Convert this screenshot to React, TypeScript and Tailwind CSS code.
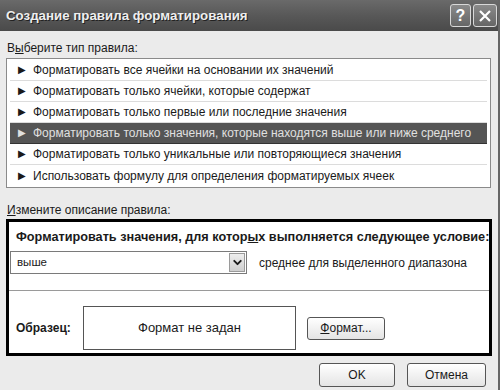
import { ChevronDown } from "lucide-react";

const rules = [
  "Форматировать все ячейки на основании их значений",
  "Форматировать только ячейки, которые содержат",
  "Форматировать только первые или последние значения",
  "Форматировать только значения, которые находятся выше или ниже среднего",
  "Форматировать только уникальные или повторяющиеся значения",
  "Использовать формулу для определения форматируемых ячеек",
];

const selected = 3;

const App = () => {
  return (
    <div className="w-[500px] h-[390px] bg-[#ebebeb] flex flex-col overflow-hidden border-r-2 border-[#666] font-['Liberation_Sans',sans-serif] text-[12px] text-[#1a1a1a]">
      {/* Title bar */}
      <div className="h-[31px] flex items-center justify-between pl-[6px] pr-[1px] bg-gradient-to-b from-[#6a6a6a] via-[#585858] to-[#4a4a4a]">
        <span className="text-[13.3px] font-bold text-[#eeeeee] [text-shadow:1px_1px_0_#222]">
          Создание правила форматирования
        </span>
        <div className="flex gap-[2px]">
          <div className="w-[21px] h-[23px] rounded-[3px] border border-[#d8d8d8] bg-gradient-to-b from-[#8a8a8a] to-[#666] flex items-center justify-center text-[16px] font-bold text-white">
            ?
          </div>
          <div className="w-[24px] h-[23px] rounded-[3px] border border-[#d8d8d8] bg-gradient-to-b from-[#8a8a8a] to-[#666] flex items-center justify-center">
            <svg width="14" height="14" viewBox="0 0 14 14">
              <path d="M2 2 L12 12 M12 2 L2 12" stroke="#fff" strokeWidth="2.2" />
            </svg>
          </div>
        </div>
      </div>

      <div className="flex flex-col px-[6px]">
        <div className="mt-[9px] h-[16px] leading-[16px] pl-[1px]">
          В<span className="underline">ы</span>берите тип правила:
        </div>
        <div className="mt-[2px] mr-[1px] border border-[#8a8a8a] bg-white px-[3px] py-[1px] flex flex-col">
          {rules.map((r, i) => (
            <div
              key={r}
              className={
                "h-[21px] flex items-center gap-[7px] pl-[8px] border-b " +
                (i === selected
                  ? "bg-[#555] text-[#e0e0e0] border-[#333]"
                  : "border-[#dcdcdc]") +
                (i === rules.length - 1 ? " border-b-0" : "")
              }
            >
              <span className="text-[10px] leading-none">▶</span>
              <span>{r}</span>
            </div>
          ))}
        </div>

        <div className="mt-[14px] h-[16px] leading-[16px] pl-[1px]">
          <span className="underline">И</span>змените описание правила:
        </div>
        <div className="mt-[1px] border-[3px] border-black bg-white flex flex-col h-[137px]">
          <div className="px-[7px] pt-[6px] font-bold text-[12.7px] whitespace-nowrap">
            Форматировать значения, для котор<span className="underline">ы</span>х выполняется следующее условие:
          </div>
          <div className="flex items-center mt-[4px] pl-[1px]">
            <div className="w-[237px] h-[23px] border border-[#7a7a7a] bg-white flex items-center justify-between pl-[6px] pr-[1px]">
              <span className="text-[11.5px]">выше</span>
              <div className="w-[16px] h-[19px] border border-[#9a9a9a] bg-gradient-to-b from-[#eee] to-[#cfcfcf] flex items-center justify-center">
                <ChevronDown className="w-[13px] h-[13px]" strokeWidth={3.5} />
              </div>
            </div>
            <span className="ml-[12px]">среднее для выделенного диапазона</span>
          </div>
          <div className="mt-[16px] border-t border-[#9a9a9a]" />
          <div className="flex items-center mt-[15px] pl-[7px]">
            <span className="font-bold w-[67px]">Образец:</span>
            <div className="w-[213px] h-[44px] border border-[#555] flex items-center justify-center text-[13px]">
              Формат не задан
            </div>
            <div className="ml-[11px] w-[78px] h-[23px] rounded-[3px] border border-[#555] bg-gradient-to-b from-white to-[#e4e4e4] flex items-center justify-center">
              <span className="underline">Ф</span>ормат...
            </div>
          </div>
        </div>
        <div className="flex justify-end gap-[12px] mt-[7px] pr-[6px]">
          <div className="w-[76px] h-[24px] rounded-[3px] border border-[#555] bg-gradient-to-b from-white to-[#e4e4e4] flex items-center justify-center">
            OK
          </div>
          <div className="w-[79px] h-[24px] rounded-[3px] border border-[#555] bg-gradient-to-b from-white to-[#e4e4e4] flex items-center justify-center">
            Отмена
          </div>
        </div>
      </div>
    </div>
  );
};

export default App;
